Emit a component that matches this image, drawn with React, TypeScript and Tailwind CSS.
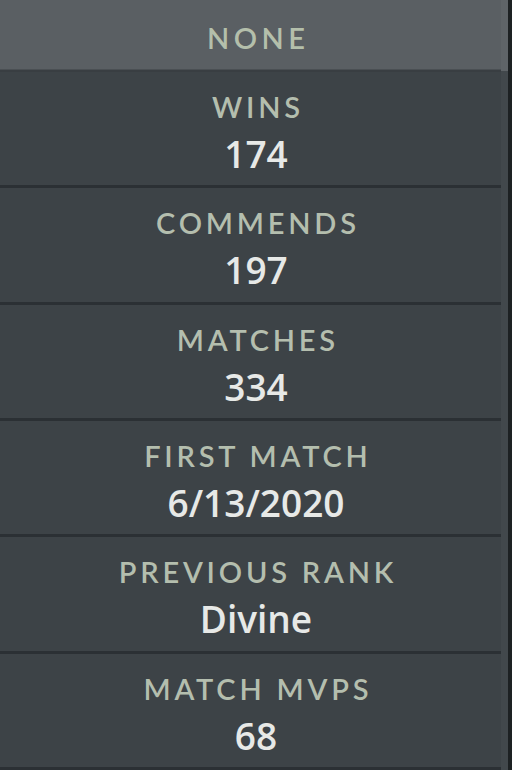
import React from 'react'

type Stat = { label: string; value: string }

const stats: Stat[] = [
  { label: 'WINS', value: '174' },
  { label: 'COMMENDS', value: '197' },
  { label: 'MATCHES', value: '334' },
  { label: 'FIRST MATCH', value: '6/13/2020' },
  { label: 'PREVIOUS RANK', value: 'Divine' },
  { label: 'MATCH MVPS', value: '68' },
]

const labelFont = { fontFamily: 'Lato, "Open Sans", sans-serif' }
const valueFont = { fontFamily: '"Open Sans", Lato, sans-serif' }

function StatRow({ stat }: { stat: Stat }) {
  return (
    <div className="flex flex-col items-center h-[117px] pt-[19px] pl-[11px] border-b-[3px] border-[#2b3034]">
      <span
        style={labelFont}
        className="text-[29px] leading-[32px] tracking-[3.8px] text-[#b4beae] font-semibold pl-[3.8px]"
      >
        {stat.label}
      </span>
      <span
        style={valueFont}
        className="mt-[11px] text-[37px] leading-[40px] text-[#e7e9e7] font-semibold"
      >
        {stat.value}
      </span>
    </div>
  )
}

export default function App() {
  return (
    <div className="flex w-[512px] h-[770px] overflow-hidden bg-[#3d4347]">
      <div className="flex-1 flex flex-col">
        {/* Header */}
        <div className="h-[70px] shrink-0 flex items-center justify-center pl-[11px] bg-[#5a5f63] border-b border-[#4a4f53]">
          <span
            style={labelFont}
            className="text-[29px] leading-[32px] tracking-[4.5px] text-[#b4bfab] font-semibold pl-[4.5px] pt-[7px]"
          >
            NONE
          </span>
        </div>
        <div className="h-[2px] shrink-0 bg-[#393e42]" />

        {stats.map((s) => (
          <StatRow key={s.label} stat={s} />
        ))}
      </div>

      {/* Right edge */}
      <div className="w-[7px] flex flex-col">
        <div className="h-[71px] bg-[#5f6468]" />
        <div className="flex-1 bg-[#42484c]" />
      </div>
      <div className="w-[4px] bg-[#1d2123]" />
    </div>
  )
}
